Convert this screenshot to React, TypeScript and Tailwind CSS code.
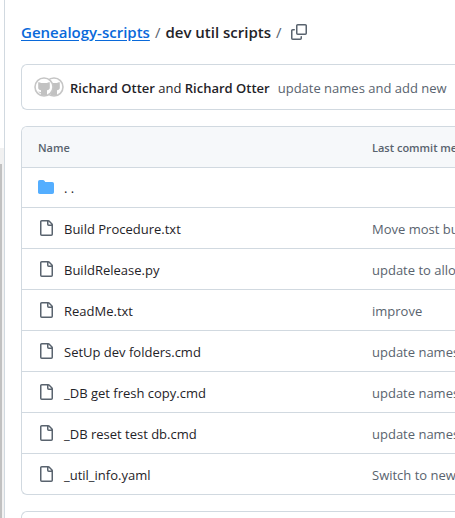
const files = [
  { name: "Build Procedure.txt", message: "Move most build steps" },
  { name: "BuildRelease.py", message: "update to allow new names" },
  { name: "ReadMe.txt", message: "improve" },
  { name: "SetUp dev folders.cmd", message: "update names and add new" },
  { name: "_DB get fresh copy.cmd", message: "update names and add new" },
  { name: "_DB reset test db.cmd", message: "update names and add new" },
  { name: "_util_info.yaml", message: "Switch to new names" },
];

const icons = {
  file: "M2 1.75C2 .784 2.784 0 3.75 0h6.586c.464 0 .909.184 1.237.513l2.914 2.914c.329.328.513.773.513 1.237v9.586A1.75 1.75 0 0 1 13.25 16h-9.5A1.75 1.75 0 0 1 2 14.25Zm1.75-.25a.25.25 0 0 0-.25.25v12.5c0 .138.112.25.25.25h9.5a.25.25 0 0 0 .25-.25V6h-2.75A1.75 1.75 0 0 1 9 4.25V1.5Zm6.75.062V4.25c0 .138.112.25.25.25h2.688l-.011-.013-2.914-2.914-.013-.011Z",
  folder:
    "M1.75 1A1.75 1.75 0 0 0 0 2.75v10.5C0 14.216.784 15 1.75 15h12.5A1.75 1.75 0 0 0 16 13.25v-8.5A1.75 1.75 0 0 0 14.25 3H7.5a.25.25 0 0 1-.2-.1l-.9-1.2C6.07 1.26 5.55 1 5 1H1.75Z",
  copy: "M0 6.75C0 5.784.784 5 1.75 5h1.5a.75.75 0 0 1 0 1.5h-1.5a.25.25 0 0 0-.25.25v7.5c0 .138.112.25.25.25h7.5a.25.25 0 0 0 .25-.25v-1.5a.75.75 0 0 1 1.5 0v1.5A1.75 1.75 0 0 1 9.25 16h-7.5A1.75 1.75 0 0 1 0 14.25ZM5 1.75C5 .784 5.784 0 6.75 0h7.5C15.216 0 16 .784 16 1.75v7.5A1.75 1.75 0 0 1 14.25 11h-7.5A1.75 1.75 0 0 1 5 9.25Zm1.75-.25a.25.25 0 0 0-.25.25v7.5c0 .138.112.25.25.25h7.5a.25.25 0 0 0 .25-.25v-7.5a.25.25 0 0 0-.25-.25Z",
};

function Icon({ name, className }: { name: keyof typeof icons; className: string }) {
  return (
    <svg
      width="16"
      height="16"
      viewBox="0 0 16 16"
      fill="currentColor"
      fillRule="evenodd"
      aria-hidden="true"
      className={className}
    >
      <path d={icons[name]} />
    </svg>
  );
}

function Avatar() {
  return (
    <svg width="20" height="20" viewBox="0 0 20 20" aria-hidden="true">
      <circle cx="10" cy="10" r="9" fill="#fff" stroke="#c6c6c6" strokeWidth="1.6" />
      <path
        fill="#c2c2c2"
        d="M4.500 5 7.200 6h5.600l2.700-1c.4 1 .3 2 .3 2.500V11c0 1.300-1.200 2-2.800 2.300V18.500H7v-2l-2.800-1.500.5-.6 2.300.8v-1.900C5.400 13 4.200 12.300 4.200 11V7.500c0-.5-.1-1.500.3-2.500Z"
      />
    </svg>
  );
}

function Breadcrumbs() {
  return (
    <nav aria-label="Breadcrumbs" className="flex h-8 items-center gap-1 text-[15px] whitespace-nowrap">
      <a href="#root" className="font-semibold text-[#0969da] underline underline-offset-2">
        Genealogy-scripts
      </a>
      <span className="px-px text-[#59636e]">/</span>
      <h1 className="font-semibold">dev util scripts</h1>
      <span className="px-px text-[#59636e]">/</span>
      <button type="button" aria-label="Copy path" className="ml-1 text-[#59636e]">
        <Icon name="copy" className="shrink-0" />
      </button>
    </nav>
  );
}

function LatestCommit() {
  return (
    <section className="mt-4 flex h-[46px] items-center overflow-hidden rounded-l-md border border-r-0 border-[#d1d9e0] pl-3 text-[13px] whitespace-nowrap">
      <div className="flex shrink-0 items-center">
        <span className="z-10">
          <Avatar />
        </span>
        <span className="-ml-2.5">
          <Avatar />
        </span>
      </div>
      <p className="ml-1.5 pt-1">
        <a href="#author" className="font-semibold">Richard Otter</a> and{" "}
        <a href="#committer" className="font-semibold">Richard Otter</a>
      </p>
      <a href="#commit" className="ml-2 pt-1 text-[#59636e]">update names and add new</a>
    </section>
  );
}

function FileTable() {
  return (
    <div className="mt-4 overflow-hidden rounded-l-md border border-r-0 border-[#d1d9e0]">
      <table className="w-full table-fixed text-left text-[13px] whitespace-nowrap">
        <thead className="bg-[#f6f8fa] text-[11px] text-[#59636e]">
          <tr className="h-10">
            <th className="w-[350px] pt-0.5 pl-4 font-semibold">Name</th>
            <th className="overflow-hidden pt-0.5 font-semibold">Last commit message</th>
          </tr>
        </thead>
        <tbody>
          <tr className="h-10 border-t border-[#d1d9e0]">
            <td colSpan={2} className="pl-4">
              <a href="#parent" aria-label="Parent directory" className="flex items-center gap-2.5">
                <Icon name="folder" className="text-[#54aeff]" />
                <span className="pt-1 text-[#1f2328]">. .</span>
              </a>
            </td>
          </tr>
          {files.map((file) => (
            <tr key={file.name} className="h-[41px] border-t border-[#d1d9e0]">
              <td className="pl-4">
                <a href="#file" className="flex items-center gap-2.5">
                  <Icon name="file" className="text-[#59636e]" />
                  <span className="pt-1">{file.name}</span>
                </a>
              </td>
              <td className="overflow-hidden pt-1 text-[#59636e]">
                <a href="#commit">{file.message}</a>
              </td>
            </tr>
          ))}
        </tbody>
      </table>
    </div>
  );
}

export default function App() {
  return (
    <div className="flex h-screen overflow-hidden bg-white font-['Open_Sans','Noto_Sans',sans-serif] text-[#1f2328]">
      <aside className="flex w-[5px] shrink-0 flex-col border-r border-[#d1d9e0] pt-[148px]">
        <div className="flex-1 bg-[#f1f1f1] pt-4">
          <div className="h-full w-0.5 bg-[#c1c1c1]" />
        </div>
      </aside>
      <main className="min-w-0 flex-1 pt-4 pl-4">
        <Breadcrumbs />
        <LatestCommit />
        <FileTable />
        <section className="mt-4 h-12 rounded-l-md border border-r-0 border-[#d1d9e0]" />
      </main>
    </div>
  );
}
